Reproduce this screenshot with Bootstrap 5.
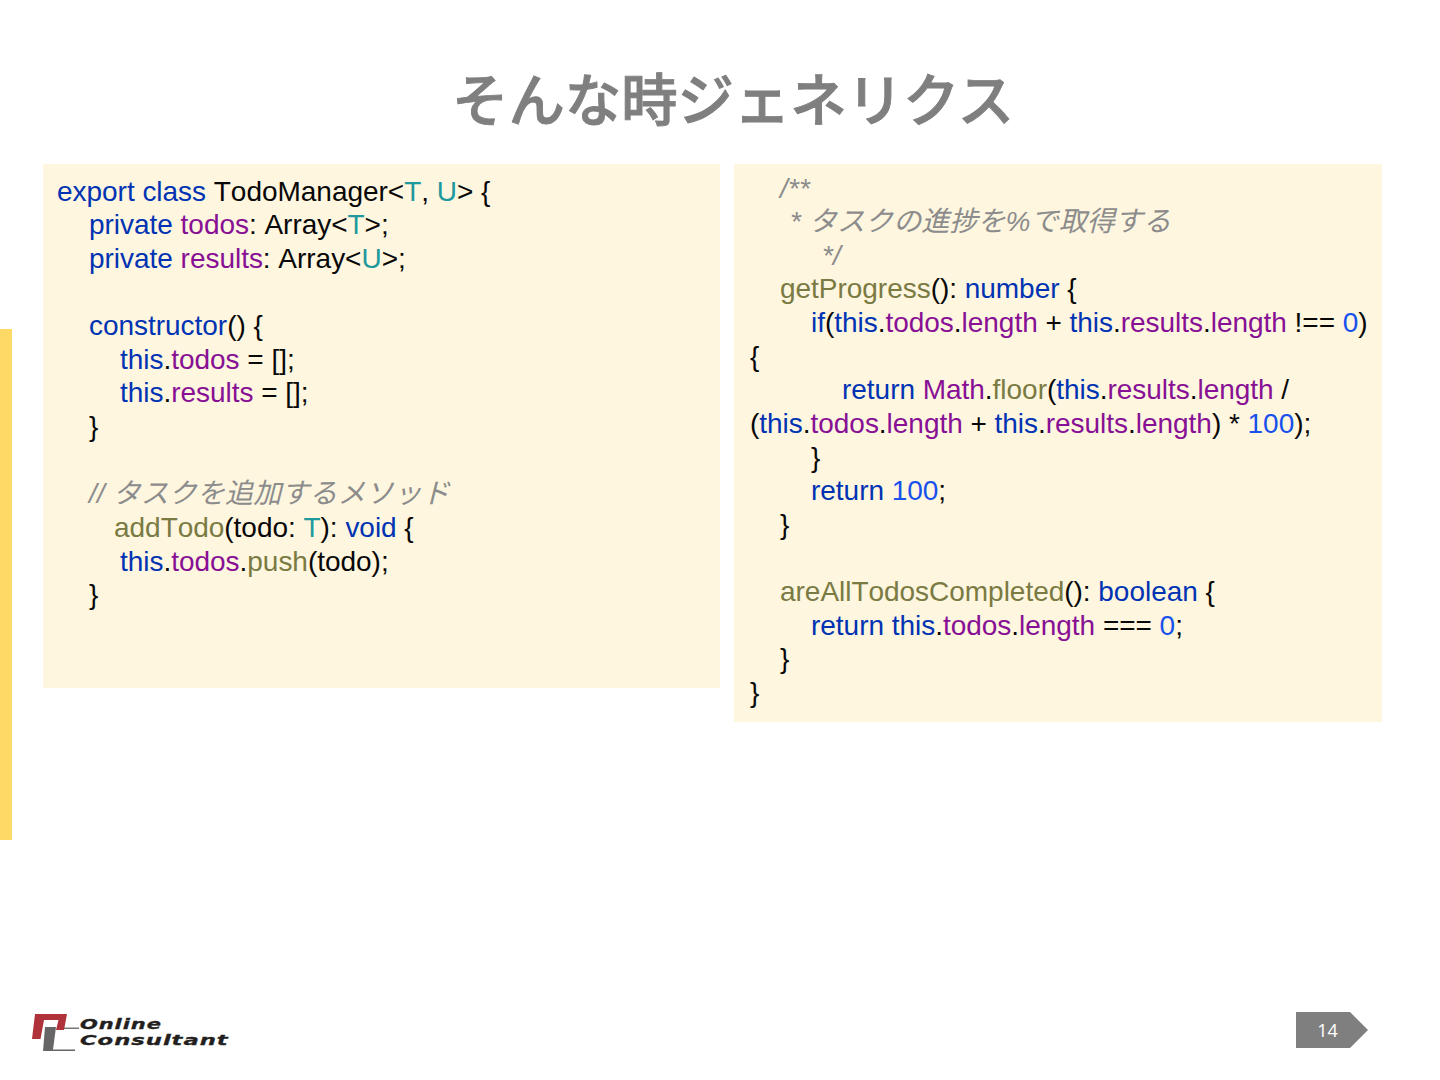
<!DOCTYPE html>
<html lang="ja"><head><meta charset="utf-8"><title>そんな時ジェネリクス</title>
<link href="https://cdn.jsdelivr.net/npm/bootstrap@5.3.0/dist/css/bootstrap.min.css" rel="stylesheet">
<style>
html,body{margin:0;background:#fff}
.slide{position:relative;width:1440px;height:1080px;overflow:hidden;font-family:"Liberation Sans","Noto Sans CJK JP",sans-serif}
.accent{position:absolute;left:0;top:329px;width:12px;height:511px;background:#ffd966}
.ttl{height:164px;padding-top:61px;padding-left:452px;font-size:56.4px;line-height:72px;color:#7f7f7f;font-family:"Noto Sans CJK JP",sans-serif;font-weight:500;-webkit-text-stroke:.9px #7f7f7f;margin:0;white-space:nowrap}
.cols{padding-left:43px;gap:14px}
.pane{background:#fef6df;color:#080808;font-size:28px;letter-spacing:-.03px;white-space:nowrap;font-kerning:none}
.pl{width:677px;height:524px;padding:10.5px 0 0 14px}
.pr{width:648px;height:558px;padding:7.5px 0 0 16px}
.ln{height:33.65px;line-height:33.65px}
.i1{padding-left:32px}.i2{padding-left:63px}.i3{padding-left:57px}.r1{padding-left:30px}.r2{padding-left:61px}.r3{padding-left:92px}.r4{padding-left:40px}.r5{padding-left:72px}
.k{color:#0033b3}.f{color:#871094}.t{color:#20999d}.m{color:#7a7a43}.n{color:#1750eb}
.c{color:#8c8c8c;font-style:italic;letter-spacing:.1px}
.foot{position:absolute;left:0;right:0;top:1010px;height:44px;padding:0 72px 0 30px}
.lgo{position:relative;width:200px;height:42px}
.lgt{position:absolute;left:50px;font-family:"DejaVu Sans",sans-serif;font-weight:700;font-style:italic;font-size:14px;line-height:15px;color:#231f20;letter-spacing:.6px;-webkit-text-stroke:.3px #231f20;transform-origin:left top}
.lg1{top:7px;transform:scaleX(1.5)}.lg2{top:23px;transform:scaleX(1.62)}
.pg{width:72px;height:36px;margin-top:2px;background:#7f7f7f;color:#fff;font-size:18px;font-family:"Open Sans",sans-serif;clip-path:polygon(0 0,75% 0,100% 50%,75% 100%,0 100%);padding-right:9px}
</style></head><body>
<div class="slide">
<div class="accent"></div>
<h1 class="ttl">そんな時ジェネリクス</h1>
<div class="d-flex align-items-start cols">
<div class="pane pl">
<div class="ln"><span class="k">export class</span> TodoManager&lt;<span class="t">T</span>, <span class="t">U</span>&gt; {</div>
<div class="ln i1"><span class="k">private</span> <span class="f">todos</span>: Array&lt;<span class="t">T</span>&gt;;</div>
<div class="ln i1"><span class="k">private</span> <span class="f">results</span>: Array&lt;<span class="t">U</span>&gt;;</div>
<div class="ln">&nbsp;</div>
<div class="ln i1"><span class="k">constructor</span>() {</div>
<div class="ln i2"><span class="k">this</span>.<span class="f">todos</span> = [];</div>
<div class="ln i2"><span class="k">this</span>.<span class="f">results</span> = [];</div>
<div class="ln i1">}</div>
<div class="ln">&nbsp;</div>
<div class="ln i1"><span class="c">// タスクを追加するメソッド</span></div>
<div class="ln i3"><span class="m">addTodo</span>(todo: <span class="t">T</span>): <span class="k">void</span> {</div>
<div class="ln i2"><span class="k">this</span>.<span class="f">todos</span>.<span class="m">push</span>(todo);</div>
<div class="ln i1">}</div>
</div>
<div class="pane pr">
<div class="ln r1"><span class="c">/**</span></div>
<div class="ln r4"><span class="c">* タスクの進捗を%で取得する</span></div>
<div class="ln r5"><span class="c">*/</span></div>
<div class="ln r1"><span class="m">getProgress</span>(): <span class="k">number</span> {</div>
<div class="ln r2"><span class="k">if</span>(<span class="k">this</span>.<span class="f">todos</span>.<span class="f">length</span> + <span class="k">this</span>.<span class="f">results</span>.<span class="f">length</span> !== <span class="n">0</span>)</div>
<div class="ln">{</div>
<div class="ln r3"><span class="k">return</span> <span class="f">Math</span>.<span class="m">floor</span>(<span class="k">this</span>.<span class="f">results</span>.<span class="f">length</span> /</div>
<div class="ln">(<span class="k">this</span>.<span class="f">todos</span>.<span class="f">length</span> + <span class="k">this</span>.<span class="f">results</span>.<span class="f">length</span>) * <span class="n">100</span>);</div>
<div class="ln r2">}</div>
<div class="ln r2"><span class="k">return</span> <span class="n">100</span>;</div>
<div class="ln r1">}</div>
<div class="ln">&nbsp;</div>
<div class="ln r1"><span class="m">areAllTodosCompleted</span>(): <span class="k">boolean</span> {</div>
<div class="ln r2"><span class="k">return this</span>.<span class="f">todos</span>.<span class="f">length</span> === <span class="n">0</span>;</div>
<div class="ln r1">}</div>
<div class="ln">}</div>
</div>
</div>
<div class="foot d-flex justify-content-between align-items-start">
<div class="lgo">
<svg width="60" height="44" viewBox="0 0 60 44" class="position-absolute top-0 start-0">
<path d="M5 4H37L34 20H26L28.5 10H14L10.5 29H2Z" fill="#b0323a"/>
<path d="M15 17H26L23 39.5H45V41H13Z" fill="#666"/>
<path d="M34 17.6H49V18.8H34Z" fill="#555"/>
</svg>
<span class="lgt lg1">Online</span><span class="lgt lg2">Consultant</span>
</div>
<div class="pg d-flex align-items-center justify-content-center">14</div>
</div>
</div>
<script src="https://cdn.jsdelivr.net/npm/bootstrap@5.3.0/dist/js/bootstrap.bundle.min.js"></script>
</body></html>
